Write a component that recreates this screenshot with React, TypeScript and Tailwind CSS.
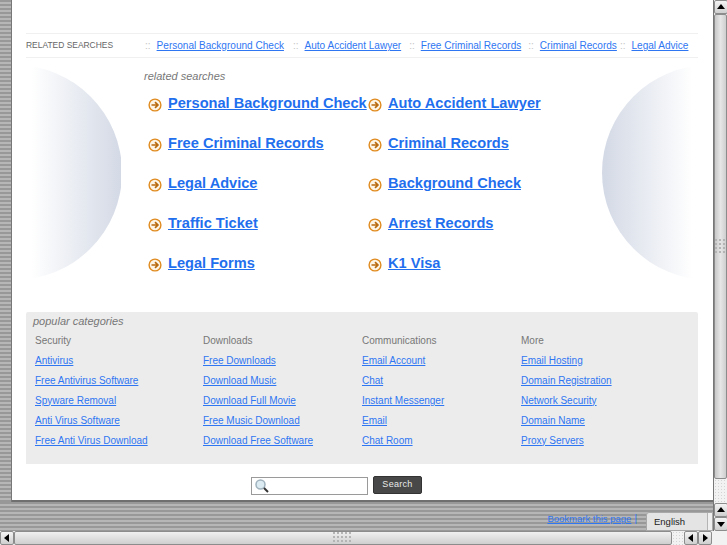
const topLinks = [
  { label: 'Personal Background Check', gap: '' },
  { label: 'Auto Accident Lawyer', gap: 'ml-[9px]' },
  { label: 'Free Criminal Records', gap: 'ml-[8px]' },
  { label: 'Criminal Records', gap: 'ml-[7px]' },
  { label: 'Legal Advice', gap: 'ml-[3px]' },
];

const mainLinks = [
  'Personal Background Check',
  'Auto Accident Lawyer',
  'Free Criminal Records',
  'Criminal Records',
  'Legal Advice',
  'Background Check',
  'Traffic Ticket',
  'Arrest Records',
  'Legal Forms',
  'K1 Visa',
];

const categories = [
  { title: 'Security', width: 'w-[168px]', links: ['Antivirus', 'Free Antivirus Software', 'Spyware Removal', 'Anti Virus Software', 'Free Anti Virus Download'] },
  { title: 'Downloads', width: 'w-[159px]', links: ['Free Downloads', 'Download Music', 'Download Full Movie', 'Free Music Download', 'Download Free Software'] },
  { title: 'Communications', width: 'w-[159px]', links: ['Email Account', 'Chat', 'Instant Messenger', 'Email', 'Chat Room'] },
  { title: 'More', width: 'w-[159px]', links: ['Email Hosting', 'Domain Registration', 'Network Security', 'Domain Name', 'Proxy Servers'] },
];

const stripes = 'bg-[repeating-linear-gradient(180deg,#989898_0px,#989898_2px,#b6b6b6_2px,#b6b6b6_4px)]';

function ArrowIcon() {
  return (
    <svg width="14" height="14" viewBox="0 0 14 14" className="shrink-0 mt-[2px]" aria-hidden="true">
      <circle cx="7" cy="7" r="5.9" fill="#fdf6e8" stroke="#e08a1e" strokeWidth="1.4" />
      <path d="M3.5 7h6M7 4.2 9.9 7 7 9.8" fill="none" stroke="#b86a10" strokeWidth="1.7" />
    </svg>
  );
}

function Grip({ cols, rows }: { cols: number; rows: number }) {
  return (
    <svg width={cols * 4} height={rows * 4} aria-hidden="true">
      {Array.from({ length: cols * rows }).map((_, i) => (
        <rect key={i} x={(i % cols) * 4} y={Math.floor(i / cols) * 4} width="2" height="2" fill="#b4b4b4" />
      ))}
    </svg>
  );
}

function ScrollButton({ dir }: { dir: 'up' | 'down' | 'left' | 'right' }) {
  const points = {
    up: '1,7 9,7 5,2',
    down: '1,3 9,3 5,8',
    left: '7,1 7,9 2,5',
    right: '3,1 3,9 8,5',
  }[dir];
  return (
    <div className="w-[14px] h-[14px] shrink-0 flex items-center justify-center rounded-[2px] border border-[#8c8c8c] bg-gradient-to-b from-[#f4f4f4] to-[#cfcfcf]">
      <svg width="10" height="10" viewBox="0 0 10 10" aria-hidden="true">
        <polygon points={points} fill="#000" />
      </svg>
    </div>
  );
}

export default function App() {
  return (
    <div className="w-[727px] h-[545px] overflow-hidden flex flex-col bg-white font-['Liberation_Sans',Arial,sans-serif]">
      <div className="flex h-[531px]">
        <div className="w-[713px] flex flex-col">
          <div className="flex h-[502px]">
            <div className={`w-[12px] ${stripes} border-r border-[#777]`} />

            {/* Page */}
            <main className="relative w-[701px] bg-white border-b-2 border-[#6f6f6f] px-[14px] pt-[33px] overflow-hidden">
              <div className="absolute left-[14px] top-[65px] w-[95px] h-[215px] overflow-hidden">
                <div className="absolute left-[-119px] top-0 w-[215px] h-[215px] rounded-full bg-gradient-to-r from-[#ffffff] from-[58%] to-[#d3d9e5]" />
              </div>
              <div className="absolute left-[590px] top-[65px] w-[95px] h-[215px] overflow-hidden">
                <div className="absolute left-0 top-0 w-[215px] h-[215px] rounded-full bg-gradient-to-l from-[#ffffff] from-[58%] to-[#d3d9e5]" />
              </div>

              {/* Related searches bar */}
              <div className="relative w-[672px] h-[25px] flex items-center border-y border-[#f0f0f0] text-[10.05px]">
                <span className="w-[119px] shrink-0 text-[8.45px] text-[#666]">RELATED SEARCHES</span>
                {topLinks.map((link) => (
                  <span key={link.label} className={`flex items-center ${link.gap}`}>
                    <span className="text-[#c4c4c4] mr-[6px]">::</span>
                    <a href="#" className="text-[#2f76f2] underline whitespace-nowrap">{link.label}</a>
                  </span>
                ))}
              </div>

              {/* Main links */}
              <div className="relative pl-[118px] pt-[11px] h-[255px]">
                <p className="text-[11px] italic text-[#777] leading-[14px]">related searches</p>
                <div className="grid grid-cols-[220px_220px] auto-rows-[40px] pl-[4px] pt-[1px]">
                  {mainLinks.map((link) => (
                    <div key={link} className="flex items-center gap-[6px] h-[40px]">
                      <ArrowIcon />
                      <a href="#" className="text-[14.6px] font-bold text-[#1f6fee] underline whitespace-nowrap">{link}</a>
                    </div>
                  ))}
                </div>
              </div>

              {/* Popular categories */}
              <section className="relative w-[672px] h-[152px] bg-[#ececec] rounded-t-[2px] px-[9px] pt-[3px] -mt-[1px]">
                <h2 className="text-[11px] italic text-[#777] leading-[13px] -ml-[2px]">popular categories</h2>
                <div className="flex">
                  {categories.map((col) => (
                    <div key={col.title} className={col.width}>
                      <div className="h-[20px] flex items-center text-[10px] text-[#777] mt-[2px]">{col.title}</div>
                      {col.links.map((link) => (
                        <a key={link} href="#" className="h-[20px] flex items-center text-[10px] text-[#2f76f2] underline whitespace-nowrap">{link}</a>
                      ))}
                    </div>
                  ))}
                </div>
              </section>

              {/* Search */}
              <div className="relative flex items-start gap-[5px] mt-[13px] pl-[225px]">
                <div className="w-[117px] h-[18px] border border-[#9a9a9a] bg-white flex items-center pl-[2px]">
                  <svg width="16" height="16" viewBox="0 0 16 16" aria-hidden="true">
                    <circle cx="6.5" cy="6.5" r="4.5" fill="#dceaf2" stroke="#9fb2bd" strokeWidth="1.5" />
                    <path d="m10 10 4 4" stroke="#333" strokeWidth="2" />
                  </svg>
                </div>
                <button className="w-[49px] h-[18px] -mt-[1px] rounded-[2px] bg-[#484848] text-[#e8e8e8] text-[9px] tracking-[0.3px] border border-[#333]">Search</button>
              </div>
            </main>
          </div>

          {/* Bottom strip */}
          <div className={`h-[29px] ${stripes} flex items-start justify-end`}>
            <a href="#" className="mt-[10px] text-[9.5px] leading-[13px] text-[#2f76f2] underline whitespace-nowrap">Bookmark this page</a>
            <span className="mt-[10px] ml-[3px] text-[10px] leading-[13px] text-[#2f76f2]">|</span>
            <div className="w-[67px] h-[19px] mt-[10px] ml-[9px] rounded-tl-[3px] bg-[#e4e4e4] border border-[#a8a8a8] flex">
              <span className="flex-1 flex items-center pl-[7px] pt-[2px] text-[9.5px] text-[#222] border-r border-[#b4b4b4]">English</span>
              <span className="w-[4px] bg-[#efefef]" />
            </div>
          </div>
        </div>

        {/* Vertical scrollbar */}
        <div className="w-[14px] flex flex-col bg-[#f2f2f2] border-l border-[#777]">
          <ScrollButton dir="up" />
          <div className="h-[465px] shrink-0 w-[13px] border border-[#8c8c8c] rounded-[2px] bg-gradient-to-r from-[#c8c8c8] via-[#e6e6e6] to-[#cfcfcf] flex items-center justify-center">
            <Grip cols={3} rows={4} />
          </div>
          <div className="flex-1 bg-[radial-gradient(#d4d4d4_1px,transparent_1px)] bg-[length:3px_3px]" />
          <ScrollButton dir="up" />
          <ScrollButton dir="down" />
        </div>
      </div>

      {/* Horizontal scrollbar */}
      <div className="h-[14px] flex bg-[#f2f2f2]">
        <ScrollButton dir="left" />
        <div className="w-[658px] h-[14px] border border-[#8c8c8c] rounded-[2px] bg-gradient-to-b from-[#f0f0f0] to-[#cfcfcf] flex items-center justify-center">
          <Grip cols={5} rows={3} />
        </div>
        <div className="w-[12px] bg-[radial-gradient(#d4d4d4_1px,transparent_1px)] bg-[length:3px_3px]" />
        <ScrollButton dir="left" />
        <ScrollButton dir="right" />
      </div>
    </div>
  );
}
